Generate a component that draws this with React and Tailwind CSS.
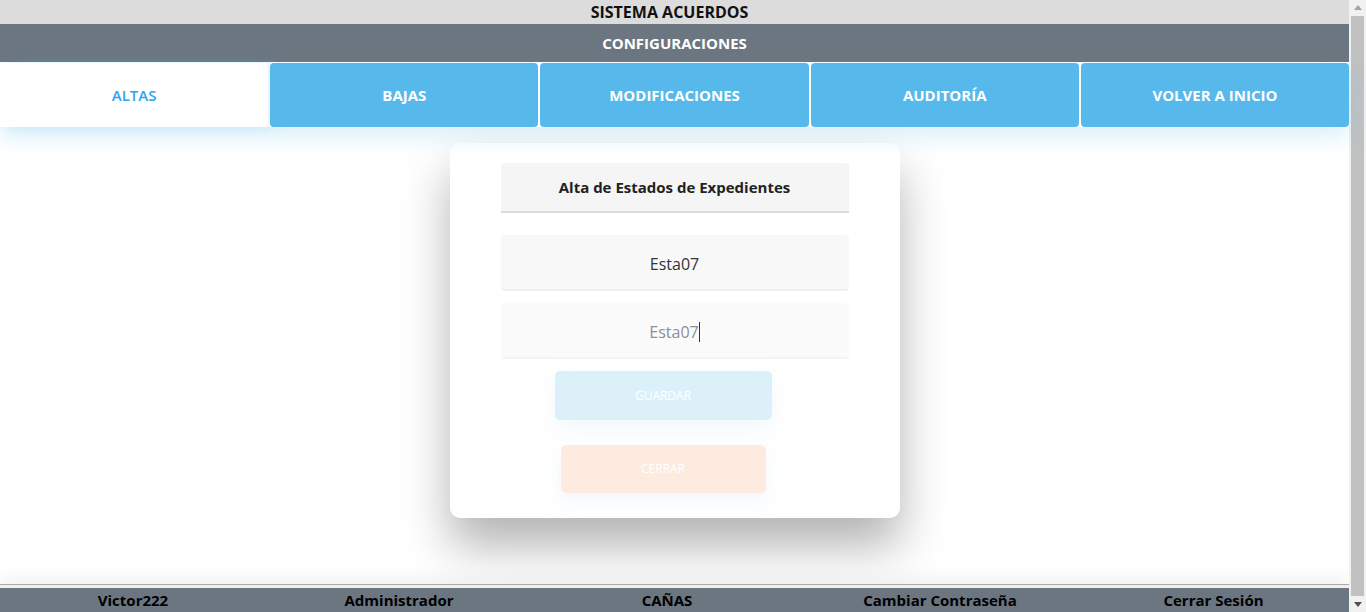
// App.jsx - Configuraciones / Alta de Estados de Expedientes

import React, { useState } from 'react';

const font = { fontFamily: '"Open Sans", "Noto Sans", Arial, sans-serif' };

const tabs = ['ALTAS', 'BAJAS', 'MODIFICACIONES', 'AUDITORÍA', 'VOLVER A INICIO'];
const footerItems = ['Victor222', 'Administrador', 'CAÑAS', 'Cambiar Contraseña', 'Cerrar Sesión'];

// --- Fake window scrollbar (the page in the shot has one) ---
const Scrollbar = () => (
    <div className="w-[17px] h-full bg-[#f1f1f1] flex flex-col items-center">
        <div className="h-[15px] flex items-center justify-center">
            <svg width="8" height="5" viewBox="0 0 8 5"><path d="M0 5 L4 0 L8 5 Z" fill="#a3a3a3" /></svg>
        </div>
        <div className="flex-1 w-[13px] bg-[#c1c1c1] my-px" />
        <div className="h-[15px] flex items-center justify-center">
            <svg width="8" height="5" viewBox="0 0 8 5"><path d="M0 0 L8 0 L4 5 Z" fill="#505050" /></svg>
        </div>
    </div>
);

export default function App() {
    const [active] = useState(0);

    return (
        <div className="flex w-[1366px] h-[612px] overflow-hidden bg-white" style={font}>
            <div className="flex-1 flex flex-col min-w-0">

                {/* --- Cabeceras --- */}
                <div className="h-6 bg-[#dcdcdc] flex items-center justify-center pr-[10px]">
                    <h1 className="text-[16px] font-bold text-[#111] leading-none">SISTEMA ACUERDOS</h1>
                </div>
                <div className="h-[38px] bg-[#6c7680] flex items-center justify-center">
                    <h2 className="text-[15px] font-bold text-white leading-none">CONFIGURACIONES</h2>
                </div>

                {/* --- Pestañas --- */}
                <div className="mt-px flex gap-[2px] shadow-[0_10px_22px_rgba(87,185,235,0.22)] relative z-10">
                    {tabs.map((t, i) => (
                        <button
                            key={t}
                            className={`flex-1 h-16 rounded-[4px] text-[15px] ${i === active ? 'bg-white text-[#2ea3f2] font-semibold shadow-[6px_0_14px_rgba(87,185,235,0.18)] z-10' : 'bg-[#57b9eb] text-white font-bold'}`}
                        >
                            {t}
                        </button>
                    ))}
                </div>

                {/* --- Contenido --- */}
                <main className="flex-1 flex justify-center pt-4">
                    <div className="w-[450px] h-[375px] bg-white rounded-[10px] shadow-[0_28px_48px_rgba(0,0,0,0.3)] flex flex-col items-center pt-5">
                        <div className="w-[348px] h-[50px] bg-[#f5f5f5] border-b-2 border-[#dcdcdc] rounded-t-[3px] flex items-center justify-center">
                            <h3 className="text-[15px] font-bold text-[#222]">Alta de Estados de Expedientes</h3>
                        </div>

                        <div className="mt-[22px] w-[348px] h-14 bg-[#f8f8f8] rounded-[4px] border-b-2 border-[#eaf2f9] flex items-center justify-center pt-[3px]">
                            <span className="text-[16px] text-[#333]">Esta07</span>
                        </div>

                        <div className="mt-3 w-[348px] h-14 bg-[#fbfbfb] rounded-[4px] border-b-2 border-[#f1f4f8] flex items-center justify-center pt-1">
                            <span className="text-[16px] text-[#8a8f98]">Esta07</span>
                            <span className="w-px h-5 bg-[#333]" />
                        </div>

                        <button className="mt-3 mr-[23px] w-[217px] h-[49px] bg-[#dcf0fa] rounded-[5px] text-[12px] text-white shadow-[0_8px_20px_rgba(200,225,245,0.25)]">
                            GUARDAR
                        </button>

                        <button className="mt-[25px] mr-[23px] w-[205px] h-12 bg-[#fdebe0] rounded-[5px] text-[12px] text-white shadow-[0_8px_20px_rgba(200,225,245,0.25)]">
                            CERRAR
                        </button>
                    </div>
                </main>

                {/* --- Pie --- */}
                <footer className="border-t border-[#a9a9a9] pt-[3px] bg-[#f0f0f0] shadow-[0_-8px_16px_rgba(0,0,0,0.05)]">
                    <div className="h-6 bg-[#6c7680] grid grid-cols-[266px_266px_270px_276px_1fr] items-center">
                        {footerItems.map((f) => (
                            <span key={f} className="text-center text-[15px] font-bold text-black leading-none">{f}</span>
                        ))}
                    </div>
                </footer>
            </div>
            <Scrollbar />
        </div>
    );
}
